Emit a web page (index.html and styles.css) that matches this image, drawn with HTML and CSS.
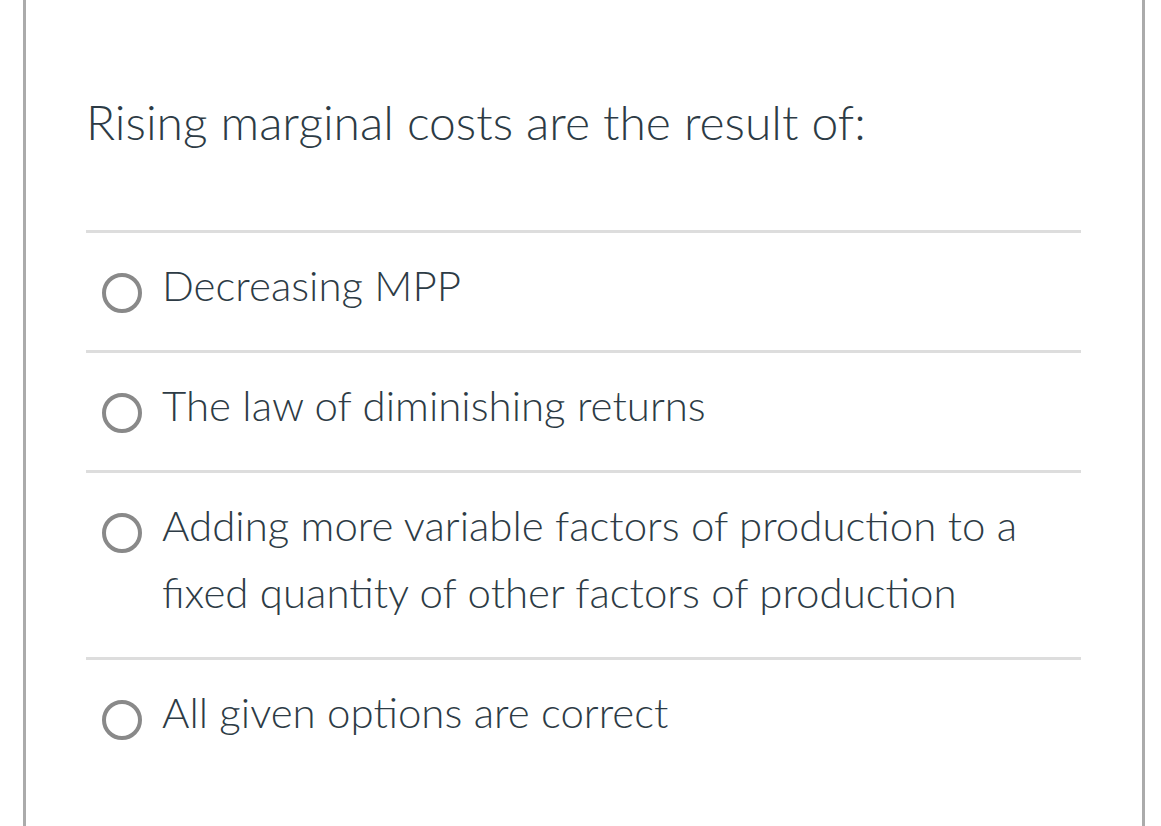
FILE: index.html
```html
<!DOCTYPE html>
<html>
<head>
<meta charset="utf-8">
<link rel="stylesheet" href="styles.css">
</head>
<body>
<div class="frame">
  <div class="question">
    <div class="prompt">Rising marginal costs are the result of:</div>
    <div class="answers">
      <label class="answer">
        <span class="radio"></span>
        <span class="text">Decreasing MPP</span>
      </label>
      <label class="answer">
        <span class="radio"></span>
        <span class="text">The law of diminishing returns</span>
      </label>
      <label class="answer">
        <span class="radio"></span>
        <span class="text">Adding more variable factors of production to a fixed quantity of other factors of production</span>
      </label>
      <label class="answer">
        <span class="radio"></span>
        <span class="text">All given options are correct</span>
      </label>
    </div>
  </div>
</div>
</body>
</html>
```

FILE: styles.css
```css
html, body {
  margin: 0;
  padding: 0;
  background: #ffffff;
}
body {
  font-family: Lato, "Open Sans", sans-serif;
  color: #2d3b45;
}
.frame {
  margin-left: 23px;
  width: 1116px;
  height: 826px;
  border-left: 3px solid #ababab;
  border-right: 3px solid #ababab;
  box-sizing: content-box;
}
.question {
  padding: 87px 61px 0 60px;
}
.prompt {
  font-size: 48px;
  font-weight: 300;
  line-height: 70px;
  margin-left: 0;
  padding-bottom: 73px;
  border-bottom: 3px solid #dddddd;
}
.answers {
  display: flex;
  flex-direction: column;
}
.answer {
  display: flex;
  align-items: flex-start;
  padding: 19px 0 31px 0;
  border-bottom: 3px solid #dddddd;
  font-size: 42px;
  font-weight: 300;
  line-height: 67px;
}
.radio {
  flex: none;
  width: 32px;
  height: 32px;
  border: 4px solid #898989;
  border-radius: 50%;
  margin: 21px 0 0 16px;
}
.text {
  margin-left: 20px;
}
.answer:last-child {
  border-bottom: none;
}
```
